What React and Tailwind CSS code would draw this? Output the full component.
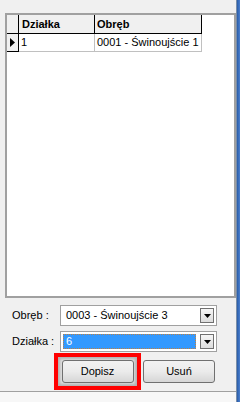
import React from 'react';

const font = { fontFamily: '"Liberation Sans", Arial, sans-serif' };

const Arrow = () => (
  <svg width="7" height="4" viewBox="0 0 7 4">
    <path d="M0 0h7L3.5 4z" fill="#000" />
  </svg>
);

const Combo = ({ value, selected }) => (
  <div className="flex h-[21px] w-[157px] items-center border border-[#a0a0a0] bg-white p-[2px]">
    {selected ? (
      <div className="flex h-full flex-1 items-center border border-dotted border-[#c08040] bg-[#3399ff] pl-[2px] text-white">
        {value}
      </div>
    ) : (
      <div className="flex h-full flex-1 items-center pl-[3px] text-black">{value}</div>
    )}
    <div className="ml-[4px] flex h-[15px] w-[14px] items-center justify-center border border-[#707070] bg-gradient-to-b from-[#f6f6f6] to-[#dcdcdc]">
      <Arrow />
    </div>
  </div>
);

const Button = ({ children }) => (
  <button className="flex h-[23px] w-[72px] items-center justify-center rounded-[3px] border border-[#707070] bg-gradient-to-b from-[#f2f2f2] via-[#ebebeb] to-[#d6d6d6] text-[11px] text-black">
    {children}
  </button>
);

export default function App() {
  return (
    <div className="flex h-[402px] w-[240px] bg-[#f0f0f0] text-[11px]" style={font}>
      <div className="flex w-[236px] flex-col">
        <div className="h-[13px] shrink-0" />

        {/* grid */}
        <div className="ml-[5px] h-[285px] w-[231px] shrink-0 border-2 border-[#a0a0a0] bg-white">
          <div className="flex h-[19px] bg-[#f0f0f0] font-bold">
            <div className="w-[12px] border-r border-b border-black" />
            <div className="flex w-[76px] items-center border-r border-b border-black pl-[3px]">Działka</div>
            <div className="flex w-[107px] items-center border-r border-b border-black pl-[2px]">Obręb</div>
            <div className="flex-1 bg-white" />
          </div>
          <div className="flex h-[18px]">
            <div className="flex w-[12px] items-center justify-center border-r border-b border-black bg-[#f0f0f0]">
              <svg width="5" height="9" viewBox="0 0 5 9">
                <path d="M0 0l5 4.5L0 9z" fill="#000" />
              </svg>
            </div>
            <div className="flex w-[76px] items-center border-r border-b border-[#c0c0c0] pl-[2px]">1</div>
            <div className="flex w-[107px] items-center border-r border-b border-[#c0c0c0] pl-[2px]">0001 - Świnoujście 1</div>
          </div>
        </div>

        {/* form */}
        <div className="mt-[7px] flex items-center">
          <span className="ml-[12px] w-[48px]">Obręb :</span>
          <Combo value="0003 - Świnoujście 3" />
        </div>
        <div className="mt-[5px] flex items-center">
          <span className="ml-[12px] w-[48px]">Działka :</span>
          <Combo value="6" selected />
        </div>

        <div className="mt-[1px] flex items-center">
          <div className="ml-[54px] flex h-[37px] w-[87px] items-center justify-center border-4 border-[#ff0000] bg-[#9a9a9a]">
            <div className="flex h-full w-full items-center justify-center bg-[#e0e0e0] shadow-[inset_0_0_3px_2px_#b0b0b0]">
              <Button>Dopisz</Button>
            </div>
          </div>
          <div className="ml-[2px]">
            <Button>Usuń</Button>
          </div>
        </div>

        <div className="mt-[1px] flex-1 border-t border-[#a0a0a0] bg-[#f7f7f7]" />
      </div>
      <div className="w-[4px] border-l border-[#7a8ea8] bg-gradient-to-r from-[#2a5da8] to-[#4a7fcf]" />
    </div>
  );
}
